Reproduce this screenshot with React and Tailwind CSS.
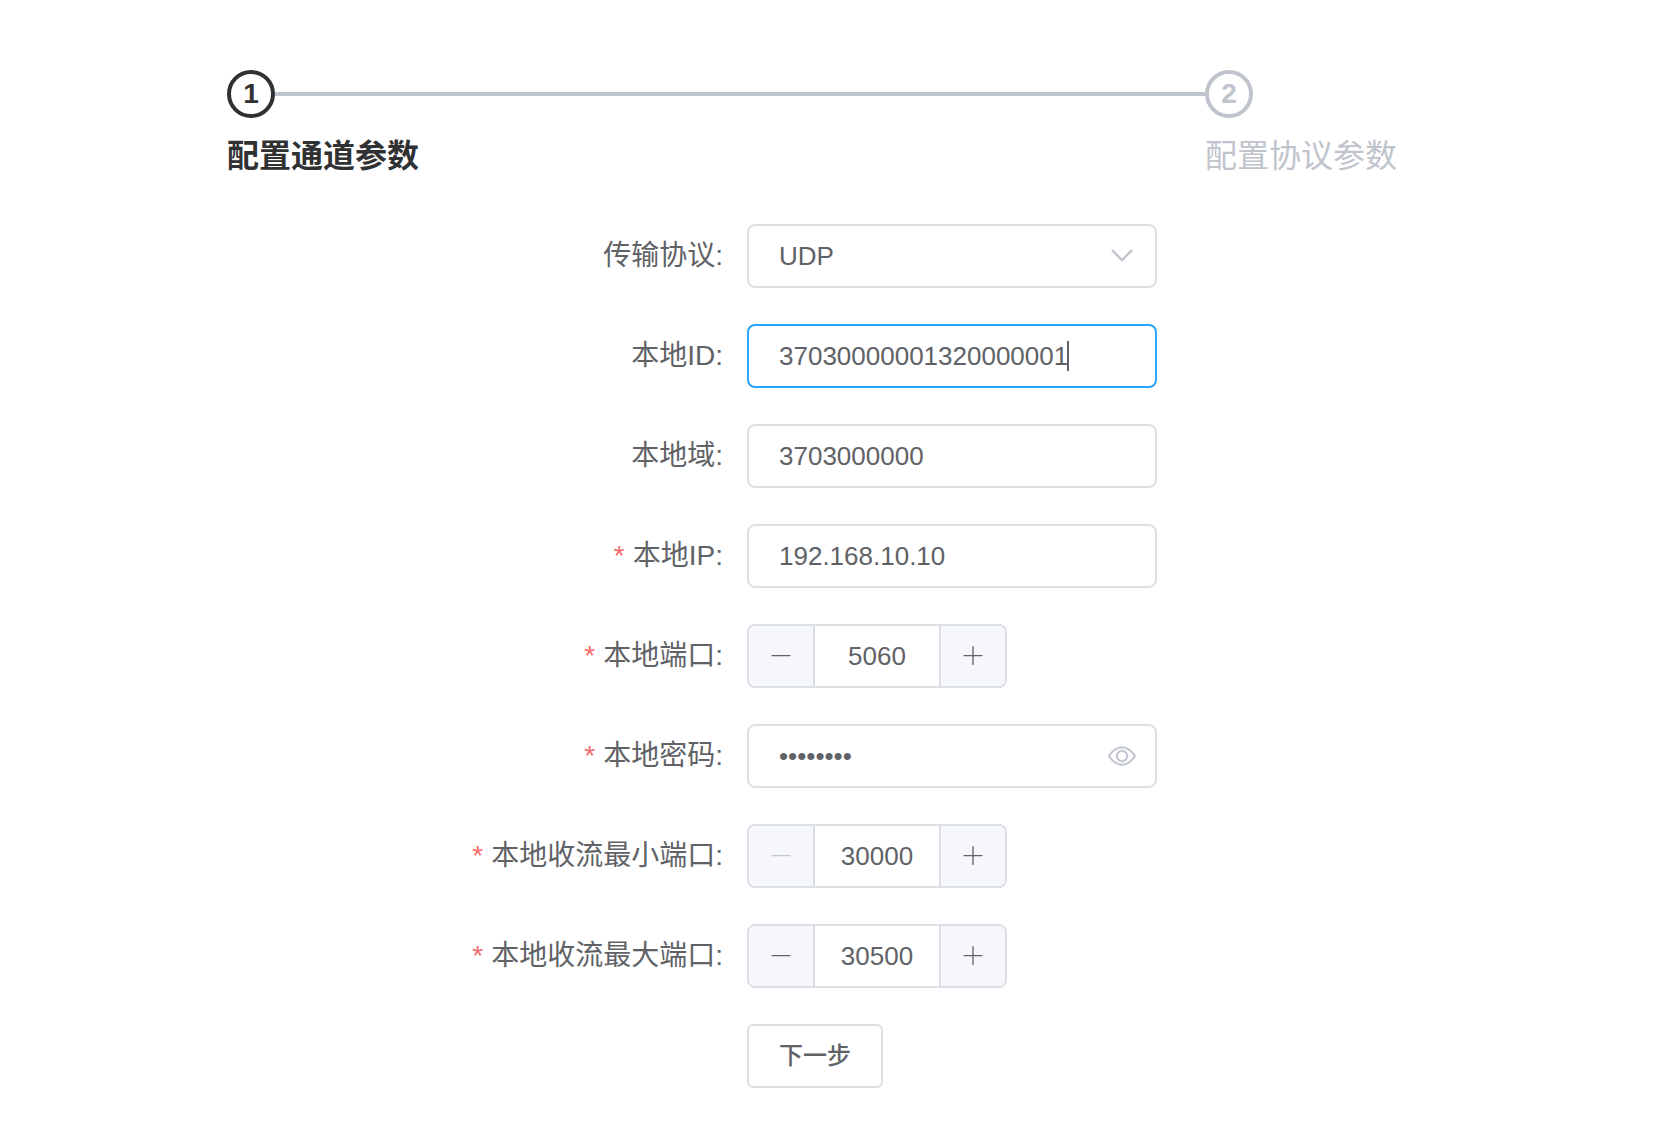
import { useState } from 'react';

const steps = [
  { no: 1, title: '配置通道参数' },
  { no: 2, title: '配置协议参数' },
];

const inputClass =
  'h-16 w-full rounded-lg border-2 bg-white px-[30px] text-[26px] text-[#606266] outline-none';

const MinusIcon = () => (
  <svg className="w-6 h-6" viewBox="0 0 24 24" fill="none" stroke="currentColor" strokeWidth="1.3" strokeLinecap="round">
    <path d="M3 11.6h18" />
  </svg>
);

const PlusIcon = () => (
  <svg className="w-6 h-6" viewBox="0 0 24 24" fill="none" stroke="currentColor" strokeWidth="1.3" strokeLinecap="round">
    <path d="M3 11.6h18M12 2.6v18" />
  </svg>
);

const ChevronIcon = () => (
  <svg className="w-7 h-7" viewBox="0 0 28 28" fill="none" stroke="currentColor" strokeWidth="2.3" strokeLinecap="round" strokeLinejoin="round">
    <path d="M4.6 8.6l9.4 9.6 9.4-9.6" />
  </svg>
);

const EyeIcon = () => (
  <svg className="w-7 h-7" viewBox="0 0 1024 1024" fill="currentColor" stroke="currentColor" strokeWidth="12">
    <path d="M512 160c320 0 512 352 512 352S832 864 512 864 0 512 0 512s192-352 512-352zm0 64c-225.28 0-384.128 208.064-436.8 288 52.608 79.872 211.456 288 436.8 288 225.28 0 384.128-208.064 436.8-288-52.608-79.872-211.456-288-436.8-288zm0 64a224 224 0 110 448 224 224 0 010-448zm0 64a160.192 160.192 0 00-160 160c0 88.192 71.744 160 160 160s160-71.808 160-160-71.744-160-160-160z" />
  </svg>
);

function Steps({ active }) {
  return (
    <ol className="flex">
      {steps.map(({ no, title }, i) => {
        const isLast = i === steps.length - 1;
        return (
          <li
            key={no}
            className={`${isLast ? 'flex-none' : 'flex-1'} ${
              no === active ? 'text-[#303133]' : 'text-[#c0c4cc]'
            }`}
          >
            <div className="flex items-center">
              <span className="flex h-12 w-12 items-center justify-center rounded-full border-4 border-current text-[28px] font-bold leading-none">
                {no}
              </span>
              {!isLast && <span className="h-1 flex-1 bg-[#c0c4cc]" />}
            </div>
            <p className={`text-[32px] leading-[76px] ${no === active ? 'font-bold' : 'font-normal'}`}>
              {title}
            </p>
          </li>
        );
      })}
    </ol>
  );
}

function FormItem({ id, label, required, children }) {
  return (
    <div className="flex">
      <label htmlFor={id} className="w-[520px] flex-none pr-6 text-right text-[28px] leading-[64px]">
        {required && <span className="mr-2 text-[#f56c6c]">*</span>}
        {label}:
      </label>
      <div className="relative w-[410px]">{children}</div>
    </div>
  );
}

function NumberInput({ id, value, onChange, min = 1 }) {
  const buttonClass =
    'flex w-[66px] flex-none items-center justify-center border-[#dcdfe6] bg-[#f5f7fa] disabled:text-[#c0c4cc]';

  return (
    <div className="flex h-16 w-[260px] overflow-hidden rounded-lg border-2 border-[#dcdfe6]">
      <button
        type="button"
        aria-label="减少"
        disabled={value <= min}
        onClick={() => onChange(value - 1)}
        className={`${buttonClass} border-r-2`}
      >
        <MinusIcon />
      </button>
      <input
        id={id}
        type="text"
        inputMode="numeric"
        value={value}
        onChange={(e) => onChange(Number(e.target.value) || min)}
        className="w-full min-w-0 flex-1 bg-white text-center text-[26px] outline-none"
      />
      <button
        type="button"
        aria-label="增加"
        onClick={() => onChange(value + 1)}
        className={`${buttonClass} border-l-2`}
      >
        <PlusIcon />
      </button>
    </div>
  );
}

export default function App() {
  const [form, setForm] = useState({
    protocol: 'UDP',
    localId: '37030000001320000001',
    domain: '3703000000',
    ip: '192.168.10.10',
    port: 5060,
    password: '12345678',
    minPort: 30000,
    maxPort: 30500,
  });
  const [showPassword, setShowPassword] = useState(false);

  const set = (key) => (value) => setForm((prev) => ({ ...prev, [key]: value }));
  const bind = (key) => ({ id: key, value: form[key], onChange: (e) => set(key)(e.target.value) });

  return (
    <main className="min-h-screen bg-white pt-[70px] pr-[257px] pb-10 pl-[227px] font-['Liberation_Sans','Noto_Sans_CJK_SC',sans-serif] text-[#606266]">
      <Steps active={1} />

      <form className="mt-[30px] flex flex-col gap-9" onSubmit={(e) => e.preventDefault()}>
        <FormItem id="protocol" label="传输协议">
          <select {...bind('protocol')} className={`${inputClass} appearance-none border-[#dcdfe6]`}>
            <option>UDP</option>
            <option>TCP</option>
          </select>
          <span className="pointer-events-none absolute inset-y-0 right-[21px] flex items-center text-[#c0c4cc]">
            <ChevronIcon />
          </span>
        </FormItem>

        <FormItem id="localId" label="本地ID">
          <input type="text" {...bind('localId')} className={`${inputClass} border-[#26a6ff] caret-transparent`} />
          {/* text cursor */}
          <span className="absolute top-[17px] left-80 h-[30px] w-0.5 bg-[#606266]" />
        </FormItem>

        <FormItem id="domain" label="本地域">
          <input type="text" {...bind('domain')} className={`${inputClass} border-[#dcdfe6]`} />
        </FormItem>

        <FormItem id="ip" label="本地IP" required>
          <input type="text" {...bind('ip')} className={`${inputClass} border-[#dcdfe6]`} />
        </FormItem>

        <FormItem id="port" label="本地端口" required>
          <NumberInput id="port" value={form.port} onChange={set('port')} />
        </FormItem>

        <FormItem id="password" label="本地密码" required>
          <input
            type={showPassword ? 'text' : 'password'}
            {...bind('password')}
            className={`${inputClass} border-[#dcdfe6]`}
          />
          <button
            type="button"
            aria-label="显示密码"
            onClick={() => setShowPassword(!showPassword)}
            className="absolute inset-y-0 right-[21px] flex items-center text-[#c0c4cc]"
          >
            <EyeIcon />
          </button>
        </FormItem>

        <FormItem id="minPort" label="本地收流最小端口" required>
          <NumberInput id="minPort" value={form.minPort} onChange={set('minPort')} min={30000} />
        </FormItem>

        <FormItem id="maxPort" label="本地收流最大端口" required>
          <NumberInput id="maxPort" value={form.maxPort} onChange={set('maxPort')} />
        </FormItem>

        <div className="flex pl-[520px]">
          <button
            type="submit"
            className="h-16 rounded-md border-2 border-[#dcdfe6] bg-white px-[30px] text-2xl leading-none font-medium"
          >
            下一步
          </button>
        </div>
      </form>
    </main>
  );
}
